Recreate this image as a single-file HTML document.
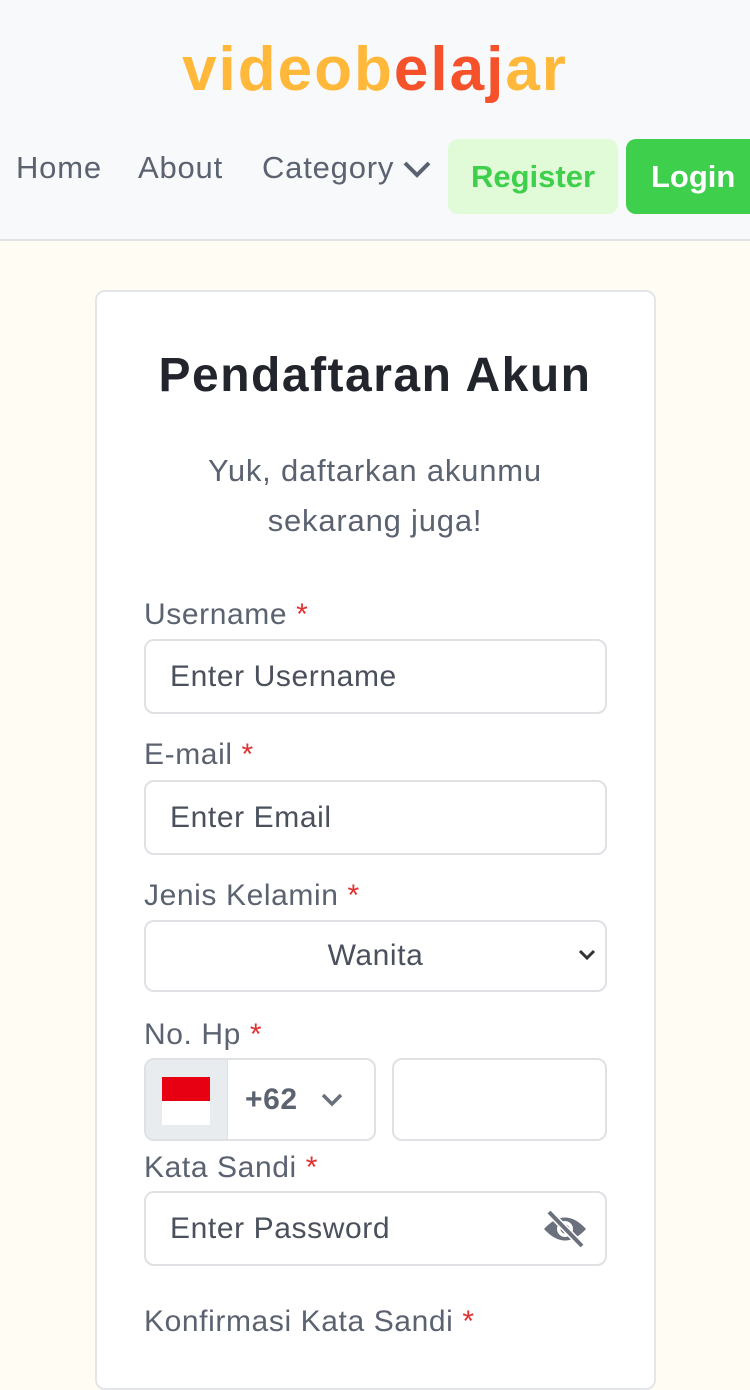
<!DOCTYPE html>
<html><head><meta charset="utf-8"><style>
*{box-sizing:border-box;margin:0;padding:0}
body{width:750px;height:1334px;overflow:hidden;background:#fffdf3;font-family:"Liberation Sans",sans-serif;color:#3a3f4a}
header{position:absolute;left:0;top:0;width:750px;height:241px;background:#f8f9fb;border-bottom:2px solid #e2e4e8}
.logo{position:absolute;top:34px;left:0;width:750px;text-align:center;font-size:62px;font-weight:bold;color:#ffb83a;letter-spacing:2px}
.logo span{color:#f5512a}
.nav{position:absolute;top:150px;font-size:31px;color:#5b6270;letter-spacing:0.8px}
.btn{position:absolute;top:139px;height:75px;border-radius:10px;font-size:31px;font-weight:bold;display:flex;align-items:center;justify-content:center}
.card{position:absolute;left:95px;top:290px;width:561px;height:1100px;background:#fff;border:2px solid #e4e5e8;border-radius:10px}
h1{position:absolute;top:348px;left:0;width:750px;text-align:center;font-size:48px;font-weight:bold;color:#22252b;letter-spacing:1.5px}
.sub{position:absolute;top:446px;left:0;width:750px;text-align:center;font-size:31px;line-height:50px;color:#5b6270;letter-spacing:0.8px}
.lbl{position:absolute;left:144px;font-size:30px;color:#5b6270;letter-spacing:0.6px}
.lbl b{color:#e03131;font-weight:normal}
.inp{position:absolute;left:144px;width:463px;height:75px;border:2px solid #dfe1e5;border-radius:10px;background:#fff;font-size:30px;color:#4a505c;padding-left:24px;display:flex;align-items:center;letter-spacing:0.6px}
</style></head><body>
<header>
<div class="logo">videob<span>ela</span><span>j</span>ar</div>
<div class="nav" style="left:16px">Home</div>
<div class="nav" style="left:138px">About</div>
<div class="nav" style="left:262px">Category</div>
<svg style="position:absolute;left:402px;top:160px" width="30" height="20" viewBox="0 0 30 20"><path d="M3 3 L15 15 L27 3" stroke="#5b6270" stroke-width="4" fill="none"/></svg>
<div class="btn" style="left:448px;width:170px;background:#e1fbd8;color:#3ecf4c">Register</div>
<div class="btn" style="left:626px;width:140px;background:#3ecf4c;color:#fff;justify-content:flex-start;padding-left:25px">Login</div>
</header>
<div class="card"></div>
<h1>Pendaftaran Akun</h1>
<div class="sub">Yuk, daftarkan akunmu<br>sekarang juga!</div>
<div class="lbl" style="top:598px">Username <b>*</b></div>
<div class="inp" style="top:639px">Enter Username</div>
<div class="lbl" style="top:738px">E-mail <b>*</b></div>
<div class="inp" style="top:780px">Enter Email</div>
<div class="lbl" style="top:879px">Jenis Kelamin <b>*</b></div>
<div class="inp" style="top:920px;height:72px;justify-content:center;padding:0">Wanita</div>
<svg style="position:absolute;left:578px;top:948px" width="18" height="14" viewBox="0 0 18 14"><path d="M2 3 L9 10 L16 3" stroke="#333" stroke-width="3" fill="none"/></svg>
<div class="lbl" style="top:1018px">No. Hp <b>*</b></div>
<div class="inp" style="top:1058px;width:232px;height:83px;padding:0;overflow:hidden">
<div style="width:82px;height:100%;background:#e9ecef;border-right:1px solid #dfe1e5;position:relative">
<div style="position:absolute;left:16px;top:17px;width:48px;height:24px;background:#e60012"></div>
<div style="position:absolute;left:16px;top:41px;width:48px;height:24px;background:#fff"></div></div>
<span style="margin-left:17px;font-weight:bold;color:#5b6270">+62</span>
<svg style="margin-left:22px" width="24" height="16" viewBox="0 0 24 16"><path d="M3 3 L12 12 L21 3" stroke="#6b717c" stroke-width="3.5" fill="none"/></svg>
</div>
<div class="inp" style="top:1058px;left:392px;width:215px;height:83px"></div>
<div class="lbl" style="top:1151px">Kata Sandi <b>*</b></div>
<div class="inp" style="top:1191px">Enter Password</div>
<svg style="position:absolute;left:542px;top:1210px" width="46" height="38" viewBox="0 0 46 38"><path d="M2 19 Q23 -4 44 19 Q23 42 2 19Z" fill="#6b717c"/><circle cx="23" cy="19" r="8" fill="#fff"/><circle cx="23" cy="19" r="4.5" fill="#6b717c"/><path d="M7 2 L40 36" stroke="#fff" stroke-width="7"/><path d="M7 2 L40 36" stroke="#6b717c" stroke-width="4"/></svg>
<div class="lbl" style="top:1305px">Konfirmasi Kata Sandi <b>*</b></div>
</body></html>
